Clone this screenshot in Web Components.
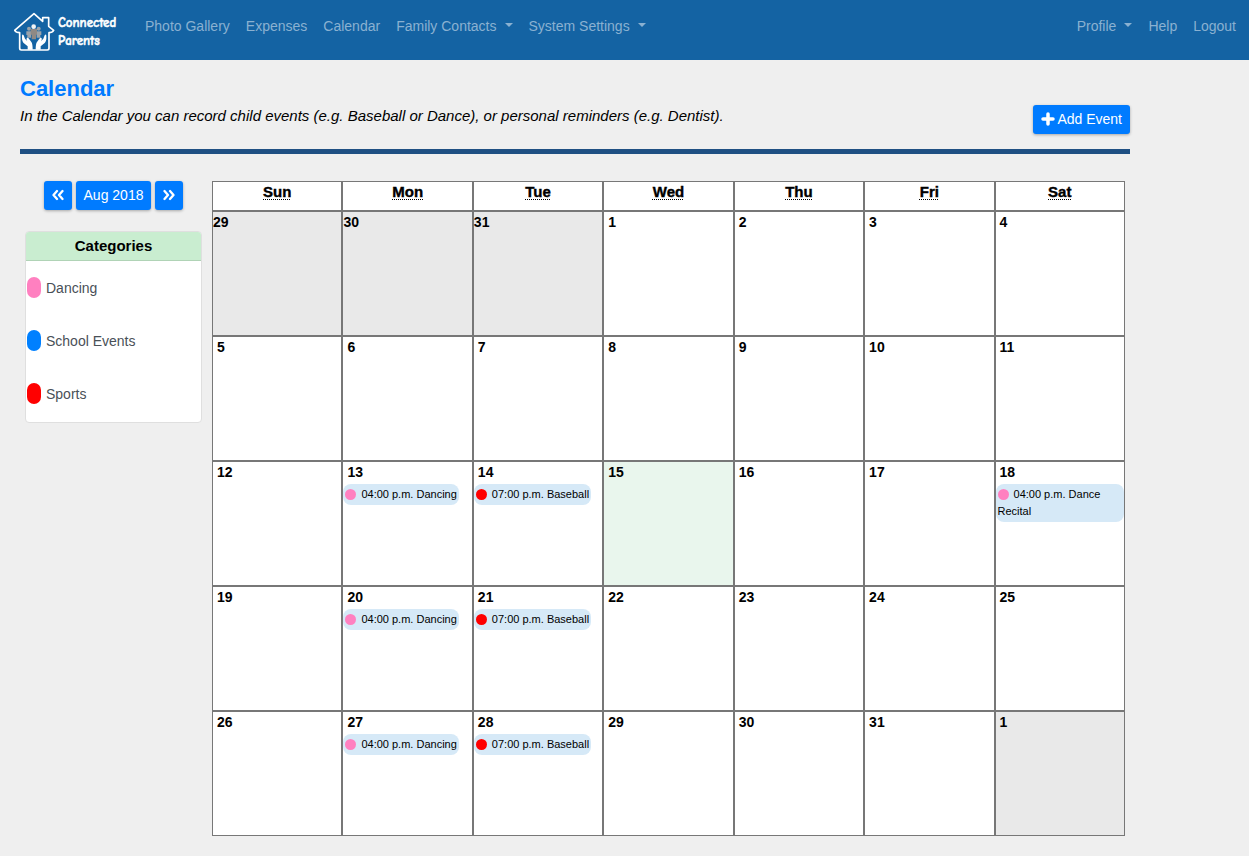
<!DOCTYPE html>
<html lang="en">
<head>
<meta charset="utf-8">
<meta name="viewport" content="width=device-width, initial-scale=1">
<title>Calendar - Connected Parents</title>
<style>
  body { margin: 0; background: #efefef; color: #000; font: 14px/20px "Liberation Sans", Arial, sans-serif; }
</style>
</head>
<body>
<cp-navbar>
  <cp-brand slot="brand"></cp-brand>
  <cp-nav-item>Photo Gallery</cp-nav-item>
  <cp-nav-item>Expenses</cp-nav-item>
  <cp-nav-item>Calendar</cp-nav-item>
  <cp-nav-item menu>Family Contacts</cp-nav-item>
  <cp-nav-item menu>System Settings</cp-nav-item>
  <cp-nav-item slot="end" menu>Profile</cp-nav-item>
  <cp-nav-item slot="end">Help</cp-nav-item>
  <cp-nav-item slot="end">Logout</cp-nav-item>
</cp-navbar>
<cp-page>
  <cp-page-header slot="header">
    Calendar
    <span slot="intro">In the Calendar you can record child events (e.g. Baseball or Dance), or personal reminders (e.g. Dentist).</span>
    <cp-button slot="action" icon="plus">Add Event</cp-button>
  </cp-page-header>
  <cp-month-picker slot="side">Aug 2018</cp-month-picker>
  <cp-categories slot="side">
    <cp-category color="#ff80c0">Dancing</cp-category>
    <cp-category color="#0080ff">School Events</cp-category>
    <cp-category color="#ff0000">Sports</cp-category>
  </cp-categories>
  <cp-month></cp-month>
</cp-page>

<script>
function define(name, html, setup) {
  const template = document.createElement('template');
  template.innerHTML = html;
  customElements.define(name, class extends HTMLElement {
    constructor() {
      super();
      this.attachShadow({ mode: 'open' }).append(template.content.cloneNode(true));
    }
    connectedCallback() {
      if (setup && !this.ready) { this.ready = true; setup(this, this.shadowRoot); }
    }
  });
}

define('cp-navbar', `
  <style>
    :host { display: block; background: #1463a3; }
    nav { display: flex; align-items: flex-start; min-height: 44px; padding: 8px 5px 8px 14px; }
    .brand { margin-right: 18px; }
    .links { display: flex; }
    .end { margin-left: auto; }
  </style>
  <nav aria-label="Main">
    <div class="brand"><slot name="brand"></slot></div>
    <div class="links"><slot></slot></div>
    <div class="links end"><slot name="end"></slot></div>
  </nav>`);

define('cp-brand', `
  <style>
    :host { display: block; }
    a { display: flex; align-items: center; gap: 3px; color: #fff; text-decoration: none; padding-top: 4px; }
    span { width: 61px; font: 700 13px/18px "Comic Sans MS", "Comic Neue", Lato, sans-serif; -webkit-text-stroke: 0.5px #fff; }
    svg { display: block; }
  </style>
  <a href="#home">
    <svg width="41" height="40" viewBox="42 36 123 120" fill="none" stroke="#fff" stroke-linecap="round" stroke-linejoin="round" aria-hidden="true">
      <path stroke-width="5" d="M59 98 Q48 98 44 91 L102 41 L128 64 V53 H146 V79 L161 91 Q157 98 147 98 V145 Q147 150 142 150 H64 Q59 150 59 145 Z"/>
      <g fill="#9ba3ab" stroke="none">
        <circle cx="87" cy="86" r="6"/><circle cx="116" cy="86" r="6"/>
        <path d="M79 94 H93 V113 H82 V105 H79Z M110 94 H124 V105 H121 V113 H110Z"/>
        <path fill="#8f8985" d="M92 87 H111 V104 H108 V118 H95 V104 H92Z"/>
        <circle fill="#f4f4f4" cx="101" cy="80" r="7"/>
      </g>
      <g fill="#fff" stroke="none">
        <path d="M66 107 Q67 100 71 106 L75 116 L82 124 Q77 115 82 113 Q84 112 88 118 L94 126 Q98 131 98 149 H83 V139 L70 128 Q67 125 66 117Z"/>
        <path d="M139 107 Q138 100 134 106 L130 116 L123 124 Q128 115 123 113 Q121 112 117 118 L111 126 Q107 131 107 149 H122 V139 L135 128 Q138 125 139 117Z"/>
      </g>
    </svg>
    <span>Connected Parents</span>
  </a>`);

define('cp-nav-item', `
  <style>
    :host { display: block; }
    a, button { display: flex; align-items: center; box-sizing: border-box; height: 36px; margin: 0; padding: 0 8px; border: 0; background: none;
      font: inherit; color: #8ab1d1; text-decoration: none; white-space: nowrap; cursor: pointer; }
    i { margin: 0 0 2px 8px; border: 4px solid transparent; border-top-color: currentColor; border-bottom: 0; }
  </style>`, (host, root) => {
    const control = document.createElement(host.hasAttribute('menu') ? 'button' : 'a');
    control.append(document.createElement('slot'));
    if (host.hasAttribute('menu')) {
      control.type = 'button';
      control.setAttribute('aria-haspopup', 'menu');
      control.append(document.createElement('i'));
    } else control.href = '#' + host.textContent.toLowerCase().replace(' ', '-');
    root.append(control);
  });

define('cp-page', `
  <style>
    :host { display: block; }
    main { max-width: 1110px; margin: 0 20px; padding-bottom: 20px; }
    .body { display: flex; gap: 10px; align-items: flex-start; padding: 27px 5px 0; }
    aside { flex: 0 0 177px; }
    section { flex: 1; min-width: 0; }
  </style>
  <main>
    <slot name="header"></slot>
    <div class="body">
      <aside><slot name="side"></slot></aside>
      <section><slot></slot></section>
    </div>
  </main>`);

define('cp-page-header', `
  <style>
    :host { display: block; }
    header { display: flex; justify-content: space-between; align-items: flex-end; gap: 20px; padding: 15px 0; border-bottom: 5px solid #1f5083; }
    h1 { margin: 0; font-size: 22px; line-height: 28px; color: #007bff; }
    p { margin: 3px 0 8px; font-size: 15px; font-style: italic; line-height: 20px; }
  </style>
  <header>
    <div><h1><slot></slot></h1><p><slot name="intro"></slot></p></div>
    <slot name="action"></slot>
  </header>`);

const ICONS = {
  plus: '<svg width="14" height="14" viewBox="0 0 14 14"><path d="M7 2v10M2 7h10" stroke="#fff" stroke-width="3.500" stroke-linecap="round"/></svg>',
  prev: '<svg width="12" height="14" viewBox="0 0 12 14"><path d="M5 3 1.500 7 5 11M10.500 3 7 7l3.500 4" fill="none" stroke="#fff" stroke-width="2.300" stroke-linecap="round" stroke-linejoin="round"/></svg>',
  next: '<svg width="12" height="14" viewBox="0 0 12 14"><path d="M1.500 3 5 7l-3.500 4M7 3l3.500 4L7 11" fill="none" stroke="#fff" stroke-width="2.300" stroke-linecap="round" stroke-linejoin="round"/></svg>'
};

define('cp-button', `
  <style>
    :host { display: block; }
    button { display: flex; align-items: center; justify-content: center; gap: 2px; height: 29px; margin: 0; padding: 0 8px 1px; border: 0; border-radius: 3px;
      background: #007bff; color: #fff; font: inherit; white-space: nowrap; box-shadow: 0 1px 3px rgba(0,0,0,.3); cursor: pointer; }
    svg { display: block; }
  </style>
  <button type="button"><slot></slot></button>`, (host, root) => {
    const button = root.querySelector('button');
    const icon = host.getAttribute('icon');
    if (icon) button.insertAdjacentHTML('afterbegin', ICONS[icon]);
    if (host.hasAttribute('label')) button.setAttribute('aria-label', host.getAttribute('label'));
  });

define('cp-month-picker', `
  <style>
    :host { display: flex; justify-content: center; gap: 4px; margin-bottom: 21px; }
  </style>
  <cp-button icon="prev" label="Previous month"></cp-button>
  <cp-button><slot></slot></cp-button>
  <cp-button icon="next" label="Next month"></cp-button>`);

define('cp-categories', `
  <style>
    :host { display: block; border: 1px solid #dfdfdf; border-radius: 4px; background: #fff; overflow: hidden; }
    h2 { margin: 0; border-bottom: 1px solid #b0d3b6; background: #c9edd0; font-size: 15px; line-height: 28px; text-align: center; }
    div { padding-bottom: 2px; }
  </style>
  <h2>Categories</h2>
  <div><slot></slot></div>`);

define('cp-category', `
  <style>
    :host { display: flex; align-items: center; gap: 5px; height: 53px; padding-left: 1px; color: #495057; }
    i { width: 14px; height: 21px; border-radius: 7px; }
  </style>
  <i></i><slot></slot>`, (host, root) => {
    root.querySelector('i').style.background = host.getAttribute('color');
  });

define('cp-event', `
  <style>
    :host { display: block; width: fit-content; max-width: 100%; box-sizing: border-box; padding: 2px; border-radius: 8px; background: #d6e9f7; font-size: 11px; line-height: 17px; }
    i { display: inline-block; width: 11px; height: 11px; margin-right: 5px; border-radius: 50%; vertical-align: -2px; }
  </style>
  <i></i><slot></slot>`, (host, root) => {
    root.querySelector('i').style.background = host.getAttribute('color');
  });

define('cp-month', `
  <style>
    :host { display: block; }
    table { width: 100%; table-layout: fixed; border-collapse: separate; border-spacing: 0; }
    th, td { box-sizing: border-box; padding: 0; border: 1px solid #777; background: #fff; vertical-align: top; }
    th { height: 30px; font-size: 15px; line-height: 20px; }
    abbr { text-decoration: underline dotted 1px; text-underline-offset: 2px; -webkit-text-stroke: 0.4px #000; }
    td { height: 125px; }
    time { display: block; padding-left: 4px; font-weight: 700; line-height: 20px; margin-bottom: 2px; }
    .outside { background: #e9e9e9; }
    .before time { padding-left: 0; }
    .today { background: #e9f6ed; }
  </style>
  <table aria-label="August 2018"><thead><tr></tr></thead><tbody></tbody></table>`, (host, root) => {
    const dancing = ['#ff80c0', '04:00 p.m. Dancing'];
    const baseball = ['#ff0000', '07:00 p.m. Baseball'];
    const events = { 13: dancing, 20: dancing, 27: dancing, 14: baseball, 21: baseball, 28: baseball, 18: ['#ff80c0', '04:00 p.m. Dance Recital'] };
    const days = ['Sunday', 'Monday', 'Tuesday', 'Wednesday', 'Thursday', 'Friday', 'Saturday'];
    root.querySelector('thead tr').innerHTML = days.map(d => `<th scope="col"><abbr title="${d}">${d.slice(0, 3)}</abbr></th>`).join('');
    let rows = '';
    for (let week = 0; week < 5; week++) {
      rows += '<tr>';
      for (let day = 0; day < 7; day++) {
        const date = new Date(Date.UTC(2018, 6, 29 + week * 7 + day));
        const number = date.getUTCDate(), month = date.getUTCMonth();
        const kind = month < 7 ? 'outside before' : month > 7 ? 'outside' : number === 15 ? 'today' : '';
        const event = month === 7 && events[number];
        rows += `<td class="${kind}"><time datetime="${date.toISOString().slice(0, 10)}">${number}</time>` +
          (event ? `<cp-event color="${event[0]}">${event[1]}</cp-event>` : '') + '</td>';
      }
      rows += '</tr>';
    }
    root.querySelector('tbody').innerHTML = rows;
  });
</script>
</body>
</html>
